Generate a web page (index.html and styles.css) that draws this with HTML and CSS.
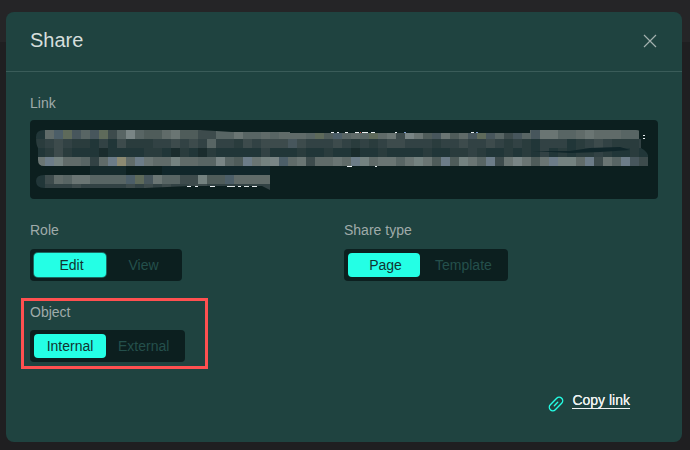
FILE: index.html
```html
<!DOCTYPE html>
<html lang="en">
<head>
<meta charset="utf-8">
<title>Share</title>
<link rel="stylesheet" href="styles.css">
</head>
<body>
<main class="modal">
  <header class="modal-header">
    <h1 class="modal-title">Share</h1>
    <button class="close" aria-label="Close">
      <svg width="14" height="14" viewBox="0 0 14 14"><path d="M1 1l12 12M13 1L1 13" stroke="currentColor" stroke-width="1.2" fill="none"/></svg>
    </button>
  </header>
  <div class="modal-body">
    <section class="field">
      <div class="label">Link</div>
      <div class="link-box">
        <svg id="mosaic" class="mosaic" width="628" height="79" viewBox="30 120 628 79"></svg>
      </div>
    </section>
    <div class="options">
      <section class="field">
        <div class="label">Role</div>
        <div class="segmented">
          <span class="seg seg-offset seg-on seg-focus">Edit</span>
          <span class="seg seg-offset">View</span>
        </div>
      </section>
      <section class="field">
        <div class="label">Share type</div>
        <div class="segmented">
          <span class="seg seg-offset seg-on">Page</span>
          <span class="seg seg-offset">Template</span>
        </div>
      </section>
      <section class="field field-marked">
        <div class="label">Object</div>
        <div class="segmented">
          <span class="seg seg-on">Internal</span>
          <span class="seg">External</span>
        </div>
      </section>
    </div>
    <footer class="actions">
      <a class="copy">
        <svg class="copy-icon" width="16" height="16" viewBox="0 0 16 16" fill="none" stroke="currentColor" stroke-width="1.4" stroke-linecap="round"><rect x="0" y="4.5" width="16" height="7" rx="3.5" transform="rotate(-45 8 8)"/><path d="M6.3 9.7l3.4-3.4"/></svg>
        <span class="copy-text">Copy link</span>
      </a>
    </footer>
  </div>
</main>
<script src="mosaic.js"></script>
</body>
</html>
```
FILE: styles.css
```css
*, *::after { box-sizing: border-box; }
html, body { margin: 0; height: 100%; }
body {
  background: linear-gradient(#252527 42px, #1f1f21 42px);
  font-family: "Liberation Sans", Arial, sans-serif;
  padding: 12px 8px 8px 6px;
  overflow: hidden;
}
.modal {
  height: 430px;
  background: #1f4340;
  border-radius: 8px;
  display: flex;
  flex-direction: column;
}
.modal-header {
  height: 60px;
  flex: none;
  border-bottom: 1px solid #3a5c59;
  display: flex;
  align-items: center;
  justify-content: space-between;
  padding: 0 25px 2px 24px;
}
.modal-title {
  margin: 0;
  font-size: 20px;
  font-weight: 400;
  color: #d6dedc;
}
.close {
  background: none;
  border: 0;
  padding: 0;
  color: #a3b0ae;
  display: flex;
}
.modal-body { padding: 22px 24px 0; }
.label {
  font-size: 14px;
  line-height: 18px;
  color: #9fabaa;
}
.link-box {
  margin-top: 8px;
  height: 79px;
  background: #0c1f1f;
  border-radius: 4px;
  overflow: hidden;
}
.mosaic { display: block; }
.options {
  margin-top: 22px;
  display: grid;
  grid-template-columns: 314px 314px;
  row-gap: 22px;
}
.segmented {
  margin-top: 10px;
  display: inline-flex;
  height: 32px;
  padding: 4px;
  background: #0c1f1f;
  border-radius: 4px;
}
.seg {
  min-width: 72px;
  padding: 0 12px;
  font-size: 14px;
  line-height: 24px;
  text-align: center;
  color: #24504c;
  border-radius: 4px;
}
.seg-offset { padding: 0 12px 0 15px; }
.seg-on {
  background: #24ffe5;
  color: #123331;
}
.seg-focus { box-shadow: 0 0 0 1px #1a6b62; }
.field-marked { position: relative; }
.field-marked .segmented { margin-top: 9px; }
.field-marked::after {
  content: "";
  position: absolute;
  left: -9px;
  top: -5px;
  width: 187px;
  height: 71px;
  border: 3px solid #ff5050;
  pointer-events: none;
}
.actions {
  margin-top: 30px;
  padding-right: 28px;
  display: flex;
  justify-content: flex-end;
}
.copy {
  display: flex;
  align-items: center;
  gap: 8px;
}
.copy-icon { color: #24ffe5; position: relative; top: 3px; }
.copy-text {
  font-size: 14px;
  line-height: 16px;
  color: #eef3f2;
  border-bottom: 1px solid #eef3f2;
  text-shadow: 0 0 .4px #eef3f2;
}
```
FILE: mosaic.js
```js
// Pixelated, redacted link: rows of 9px cells, one palette letter per cell; "." leaves a gap.
var palette = {
  a:"#1a2c2d", b:"#213638", c:"#2a3c3d", d:"#324244", e:"#3d4b4c", f:"#47565c",
  g:"#4f5c5a", h:"#586564", i:"#606b69", j:"#6a7573", k:"#748280", l:"#798585",
  m:"#4c5e68", n:"#6c7c88", o:"#8c8a72", p:"#5e6a5a", q:"#152a2c", r:"#10262a"
};
var rows = [
  [130, "bimpfhfpehlhggijggeehhjhhihiiihpgmhihpijeljgfjgifpfhefhfjjhhijiiihh"],
  [139, "cdedccbdbecccddededhddcedeeefedddedcdcdeedddcddeddedcdcbdddbcdedcccd"],
  [148, "bcecbbbabbbbccbacbacbbbbbdbbbcbbcbbabbcbbbbcbbccdcbbcbcbdbcbccdcbbcb"],
  [157, "jnkiihdinoinjiikiihhlhgnjklmijeiijinkijjhjkjgngkjhnejljgjnkkinejhnfe"],
  [166, "......qqqq....rrrrrrrrrrrr"],
  [175, "beihjjhhhhmpfjhheekggmiiii"],
  [184, "bdddedddddedededdeeddddddd"]
];
// Small bright fragments left at the edges of the pixelation.
var glitches = [
  [331, 132, 3, "#e8eef0"], [337, 132, 2, "#e8eef0"], [345, 132, 3, "#e8eef0"],
  [355, 132, 4, "#e8eef0"], [360, 132, 1, "#c0504a"], [362, 132, 6, "#e8eef0"],
  [371, 132, 4, "#e8eef0"], [395, 132, 2, "#e8eef0"], [404, 132, 2, "#7fa0d0"],
  [471, 132, 3, "#e8eef0"], [476, 132, 2, "#7fa0d0"], [643, 135, 2, "#e8eef0"],
  [643, 138, 2, "#e8eef0"], [347, 166, 5, "#e8eef0"], [375, 166, 2, "#e8eef0"],
  [187, 186, 4, "#e8eef0"], [195, 186, 3, "#e8eef0"], [210, 186, 5, "#e8eef0"],
  [227, 186, 8, "#d8e0e0"], [238, 186, 3, "#e8eef0"], [244, 186, 5, "#d8e0e0"],
  [252, 186, 5, "#e8eef0"]
];
var ns = "http://www.w3.org/2000/svg";
var svg = document.getElementById("mosaic");
function make(name, attrs, parent) {
  var el = document.createElementNS(ns, name);
  Object.keys(attrs).forEach(function (k) { el.setAttribute(k, attrs[k]); });
  parent.appendChild(el);
  return el;
}
var clip = make("clipPath", { id: "blot" }, svg);
make("path", { d:
  "M44 130H200L232 132H290V133H530V130H636Q641 130 641 135V148Q649 152 649 160V166H44Q38 166 38 160V148Q36 145 36 137Q36 130 44 130Z" +
  "M90 166H126V175H90ZM162 166H270V175H162Z" +
  "M44 175H270V190L262 186H190L145 188H44Q36 188 36 181Q36 175 44 175Z"
}, clip);
var group = make("g", { "clip-path": "url(#blot)", "shape-rendering": "crispEdges" }, svg);
rows.forEach(function (row) {
  row[1].split("").forEach(function (c, i) {
    if (c === ".") return;
    make("rect", { x: 36 + i * 9, y: row[0], width: 9, height: 9, fill: palette[c] }, group);
  });
});
make("path", { d: "M532 151L570 151L590 148L620 147L630 150L600 152L570 153Z", fill: "#10262a" }, svg);
glitches.forEach(function (g) {
  make("rect", { x: g[0], y: g[1], width: g[2], height: 1, fill: g[3], "shape-rendering": "crispEdges" }, svg);
});
```
